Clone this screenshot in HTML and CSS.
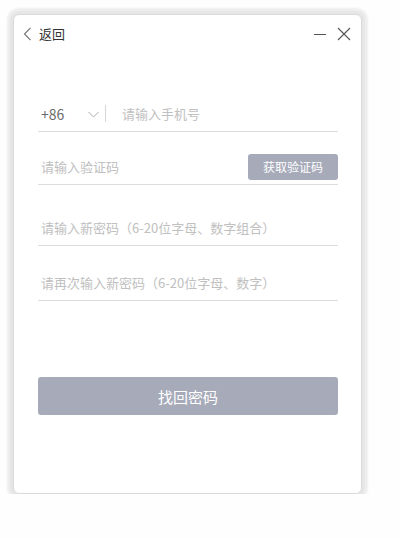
FILE: index.html
```html
<!DOCTYPE html>
<html lang="zh-CN">
<head>
<meta charset="utf-8">
<title>找回密码</title>
<link rel="stylesheet" href="styles.css">
</head>
<body>
<div class="window">
  <div class="header">
    <div class="back">
      <svg class="back-icon" width="9" height="14" viewBox="0 0 9 14"><path d="M7.5 0.8 L1.5 7 L7.5 13.2" fill="none" stroke="#777" stroke-width="1.2"/></svg>
      <span class="back-text">返回</span>
    </div>
    <div class="controls">
      <svg width="14" height="14" viewBox="0 0 14 14"><path d="M1 7.5 H13" stroke="#555" stroke-width="1"/></svg>
      <svg width="14" height="14" viewBox="0 0 14 14"><path d="M1 1 L13 13 M13 1 L1 13" stroke="#555" stroke-width="1.1"/></svg>
    </div>
  </div>
  <div class="form">
    <div class="field field-phone">
      <span class="code">+86</span>
      <svg class="caret" width="11" height="7" viewBox="0 0 11 7"><path d="M0.5 1 L5.5 6 L10.5 1" fill="none" stroke="#aaa" stroke-width="1"/></svg>
      <span class="divider"></span>
      <span class="placeholder ph-phone">请输入手机号</span>
    </div>
    <div class="field field-code">
      <span class="placeholder">请输入验证码</span>
      <button class="get-code">获取验证码</button>
    </div>
    <div class="field field-pwd1">
      <span class="placeholder">请输入新密码（6-20位字母、数字组合）</span>
    </div>
    <div class="field field-pwd2">
      <span class="placeholder">请再次输入新密码（6-20位字母、数字）</span>
    </div>
    <button class="submit">找回密码</button>
  </div>
</div>
</body>
</html>
```

FILE: styles.css
```css
* { box-sizing: border-box; }
html, body { margin: 0; padding: 0; background: #fefefe; }
body {
  font-family: "Noto Sans CJK SC", "Liberation Sans", sans-serif;
  padding: 14px 0 0 13px;
}
.window {
  width: 349px;
  height: 480px;
  background: #fff;
  border-radius: 6px;
  border: 1px solid #dadada;
  box-shadow: 0 0 0 3px #e6e6e6, 0 0 2px 6px #eeeeee;
}
.header {
  height: 38px;
  display: flex;
  align-items: center;
  justify-content: space-between;
  padding: 0 10px 0 9px;
}
.back { display: flex; align-items: center; gap: 7px; }
.back-icon { display: block; }
.back-text { font-size: 13px; color: #333; line-height: 14px; }
.controls { display: flex; align-items: center; gap: 10px; }
.controls svg { display: block; }
.form { padding: 43px 23px 0 24px; }
.field {
  height: 36px;
  border-bottom: 1px solid #dcdcdc;
  display: flex;
  align-items: center;
  padding-left: 3px;
}
.placeholder { font-size: 13px; color: #c0c0c0; white-space: nowrap; }
.code { font-size: 14px; color: #6a6a6a; width: 47px; }
.caret { display: block; margin-top: 1px; }
.divider { width: 1px; height: 17px; background: #d6d6d6; margin: 0 16px 0 6px; }
.field-code { margin-top: 17px; justify-content: space-between; padding-right: 0; }
.get-code {
  width: 90px; height: 26px;
  background: #a6aab9; border: none; border-radius: 3px;
  color: #fff; font-family: inherit; font-size: 12px; padding: 0;
}
.field-pwd1 { margin-top: 25px; }
.field-pwd2 { margin-top: 19px; }
.submit {
  display: block;
  margin-top: 76px;
  width: 100%; height: 38px;
  background: #a6aab9; border: none; border-radius: 3px;
  color: #fff; font-family: inherit; font-size: 15px; padding: 0;
}
```
